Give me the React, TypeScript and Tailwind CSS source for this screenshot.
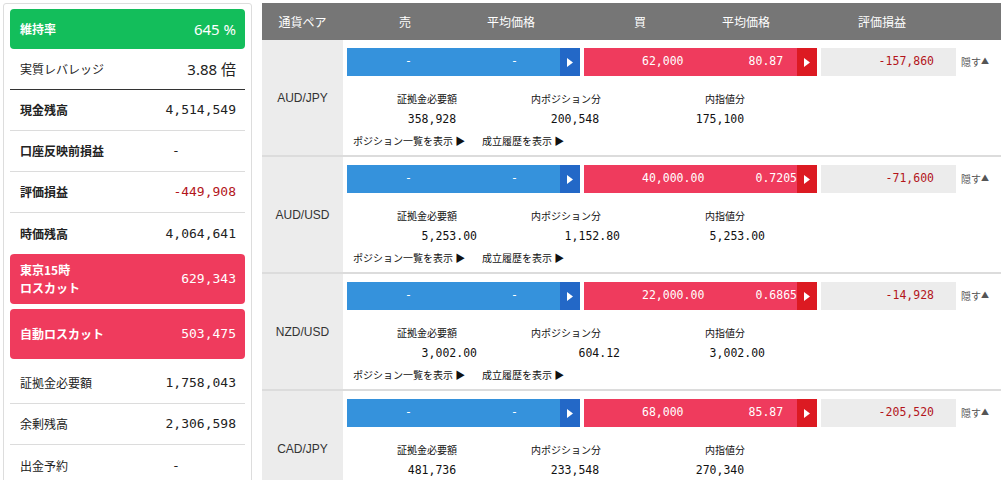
const accountRows = [
  { label: "実質レバレッジ", value: "3.88 倍", bold: false, sans: true, border: "border-b border-[#333333]" },
  { label: "現金残高", value: "4,514,549", bold: true, border: "border-b border-[#dcdcdc]" },
  { label: "口座反映前損益", value: "-", bold: true, border: "border-b border-[#dcdcdc]" },
  { label: "評価損益", value: "-449,908", bold: true, red: true, border: "border-b border-[#dcdcdc]" },
  { label: "時価残高", value: "4,064,641", bold: true, border: "" },
];

const lowerRows = [
  { label: "証拠金必要額", value: "1,758,043", border: "border-b border-[#dcdcdc]" },
  { label: "余剰残高", value: "2,306,598", border: "border-b border-[#dcdcdc]" },
  { label: "出金予約", value: "-", border: "" },
];

// values are padded so the decimal points line up (monospace)
const positions = [
  {
    pair: "AUD/JPY",
    buyQty: "62,000",
    buyAvg: "80.87  ",
    pl: "-157,860",
    margin: "358,928   ",
    pos: "200,548   ",
    limit: "175,100   ",
  },
  {
    pair: "AUD/USD",
    buyQty: "40,000.00",
    buyAvg: "0.7205",
    pl: "-71,600",
    margin: "5,253.00",
    pos: "1,152.80",
    limit: "5,253.00",
  },
  {
    pair: "NZD/USD",
    buyQty: "22,000.00",
    buyAvg: "0.6865",
    pl: "-14,928",
    margin: "3,002.00",
    pos: "604.12",
    limit: "3,002.00",
  },
  {
    pair: "CAD/JPY",
    buyQty: "68,000",
    buyAvg: "85.87  ",
    pl: "-205,520",
    margin: "481,736   ",
    pos: "233,548   ",
    limit: "270,340   ",
  },
];

function Arrow({ bg }: { bg: string }) {
  return (
    <div className={`w-[20px] h-full flex items-center justify-center ${bg}`}>
      <svg width="6" height="9" viewBox="0 0 6 9">
        <polygon points="0,0 6,4.5 0,9" fill="#ffffff" />
      </svg>
    </div>
  );
}

function AccountPanel() {
  return (
    <div className="w-[249px] shrink-0 h-[500px] border border-[#dddddd] rounded-[3px] px-[6px] pt-[5px]">
      <div className="h-[40px] rounded-[4px] bg-[#13be5b] flex items-center justify-between pl-[10px] pr-[9px] text-white">
        <span className="text-[12px] font-bold">維持率</span>
        <span className="text-[15px] [font-family:'Noto_Sans',sans-serif]">645 %</span>
      </div>

      {accountRows.map((r) => (
        <div
          key={r.label}
          className={`flex items-center justify-between h-[41px] pl-[10px] pr-[9px] text-[#222222] ${r.border}`}
        >
          <span className={`text-[12px] ${r.bold ? "font-bold" : ""}`}>{r.label}</span>
          {r.sans ? (
            <span className="text-[15px] [font-family:'Noto_Sans','Noto_Sans_CJK_JP',sans-serif]">{r.value}</span>
          ) : (
            <span
              className={`w-[120px] text-[13px] [font-family:'DejaVu_Sans_Mono',monospace] ${
                r.value === "-" ? "text-center" : "text-right"
              } ${r.red ? "text-[#b3151b]" : ""}`}
            >
              {r.value}
            </span>
          )}
        </div>
      ))}

      <div className="h-[50px] rounded-[4px] bg-[#ef3b5d] flex items-center justify-between pl-[10px] pr-[9px] text-white">
        <span className="text-[12px] font-bold leading-[18px]">
          東京15時
          <br />
          ロスカット
        </span>
        <span className="text-[13px] [font-family:'DejaVu_Sans_Mono',monospace]">629,343</span>
      </div>
      <div className="mt-[5px] mb-[4px] h-[50px] rounded-[4px] bg-[#ef3b5d] flex items-center justify-between pl-[10px] pr-[9px] text-white">
        <span className="text-[12px] font-bold">自動ロスカット</span>
        <span className="text-[13px] [font-family:'DejaVu_Sans_Mono',monospace]">503,475</span>
      </div>

      {lowerRows.map((r) => (
        <div
          key={r.label}
          className={`flex items-center justify-between h-[41px] pl-[10px] pr-[9px] text-[#222222] ${r.border}`}
        >
          <span className="text-[12px]">{r.label}</span>
          <span
            className={`w-[120px] text-[13px] [font-family:'DejaVu_Sans_Mono',monospace] ${
              r.value === "-" ? "text-center" : "text-right"
            }`}
          >
            {r.value}
          </span>
        </div>
      ))}
    </div>
  );
}

function PositionRow({ p }: { p: (typeof positions)[number] }) {
  return (
    <div className="flex h-[117px] shrink-0 border-b-2 border-[#dcdcdc]">
      <div className="w-[81px] shrink-0 bg-[#ececec] flex items-center justify-center text-[12px] text-[#333333] [font-family:'Liberation_Sans',sans-serif]">
        {p.pair}
      </div>
      <div className="flex-1 pl-[4px] pt-[8px] flex flex-col">
        <div className="flex items-center h-[28px] text-[11.5px] [font-family:'DejaVu_Sans_Mono',monospace]">
          <div className="flex w-[233px] h-full">
            <div className="flex w-[213px] h-full items-center bg-[#3592dc] text-white">
              <span className="w-[106px] pl-[58px]">-</span>
              <span className="flex-1 pl-[58px]">-</span>
            </div>
            <Arrow bg="bg-[#2368c7]" />
          </div>
          <div className="flex w-[233px] h-full ml-[4px]">
            <div className="flex w-[213px] h-full items-center bg-[#ef3b5d] text-white">
              <span className="w-[106px] pl-[58px] whitespace-pre">{p.buyQty}</span>
              <span className="flex-1 text-right whitespace-pre">{p.buyAvg}</span>
            </div>
            <Arrow bg="bg-[#dc1a22]" />
          </div>
          <div className="w-[135px] h-full ml-[4px] bg-[#ececec] flex items-center justify-end pr-[22px] text-[#b3151b]">
            {p.pl}
          </div>
          <div className="ml-[5px] mb-[2px] flex items-center text-[#555555] [font-family:'Noto_Sans_CJK_JP',sans-serif]">
            <span className="text-[10px]">隠す</span>
            <span className="text-[8px]">▲</span>
          </div>
        </div>

        <div className="flex mt-[16px] text-[10px] leading-[14px] text-[#111111]">
          <span className="w-[160px] text-center">証拠金必要額</span>
          <span className="w-[118px] text-center">内ポジション分</span>
          <span className="w-[200px] text-center">内指値分</span>
        </div>
        <div className="flex mt-[5px] text-[11.5px] leading-[16px] text-[#111111] whitespace-pre [font-family:'DejaVu_Sans_Mono',monospace]">
          <span className="w-[130px] text-right">{p.margin}</span>
          <span className="w-[143px] text-right">{p.pos}</span>
          <span className="w-[145px] text-right">{p.limit}</span>
        </div>
        <div className="flex mt-[7px] pl-[6px] text-[10px] leading-[14px] text-[#111111]">
          <span className="w-[129px]">ポジション一覧を表示 ▶</span>
          <span>成立履歴を表示 ▶</span>
        </div>
      </div>
    </div>
  );
}

function PositionTable() {
  return (
    <div className="flex-1 ml-[10px] flex flex-col">
      <div className="h-[37px] shrink-0 bg-[#767676] flex items-center text-white text-[12px]">
        <span className="w-[81px] text-center">通貨ペア</span>
        <span className="w-[124px] text-center">売</span>
        <span className="w-[88px] text-center">平均価格</span>
        <span className="w-[29px]" />
        <span className="w-[112px] text-center">買</span>
        <span className="w-[100px] text-center">平均価格</span>
        <span className="w-[172px] text-center">評価損益</span>
      </div>
      {positions.map((p) => (
        <PositionRow key={p.pair} p={p} />
      ))}
    </div>
  );
}

export default function App() {
  return (
    <div className="flex w-[1001px] h-[480px] overflow-hidden bg-white pt-[3px] pl-[3px] [font-family:'Noto_Sans_CJK_JP',sans-serif]">
      <AccountPanel />
      <PositionTable />
    </div>
  );
}
